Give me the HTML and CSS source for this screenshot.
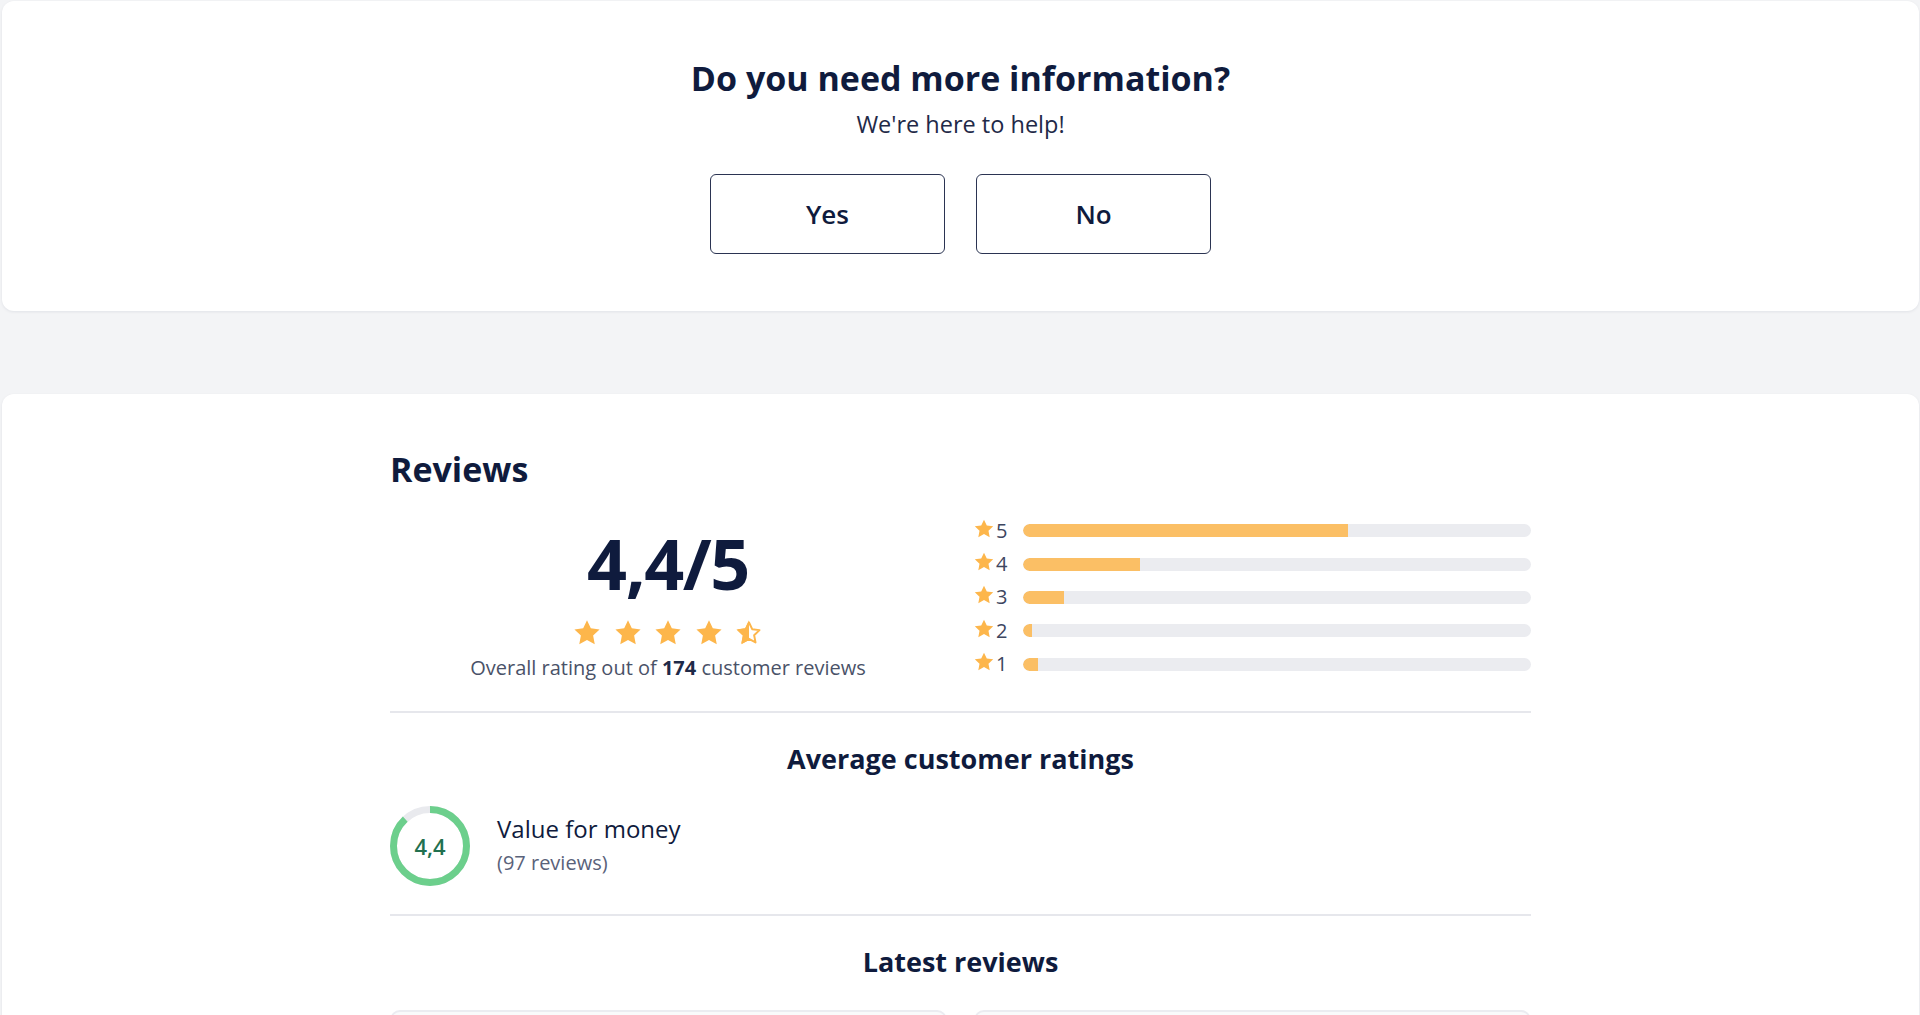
FILE: index.html
```html
<!DOCTYPE html>
<html lang="en">
<head>
<meta charset="utf-8">
<title>Reviews</title>
<link rel="stylesheet" href="styles.css">
</head>
<body>
<div class="page">
  <section class="card help">
    <h2 class="help-title">Do you need more information?</h2>
    <p class="help-sub">We're here to help!</p>
    <div class="help-actions">
      <button class="btn">Yes</button>
      <button class="btn">No</button>
    </div>
  </section>

  <section class="card reviews">
    <div class="inner">
      <h2 class="reviews-title">Reviews</h2>
      <div class="summary">
        <div class="overall">
          <div class="score">4,4/5</div>
          <div class="stars">
            <svg class="star" viewBox="0 0 24 24"><path d="M12 1.8l3.05 6.4 7 .9-5.15 4.85 1.3 6.95L12 17.5l-6.2 3.4 1.3-6.95L1.95 9.1l7-.9z"/></svg>
            <svg class="star" viewBox="0 0 24 24"><path d="M12 1.8l3.05 6.4 7 .9-5.15 4.85 1.3 6.95L12 17.5l-6.2 3.4 1.3-6.95L1.95 9.1l7-.9z"/></svg>
            <svg class="star" viewBox="0 0 24 24"><path d="M12 1.8l3.05 6.4 7 .9-5.15 4.85 1.3 6.95L12 17.5l-6.2 3.4 1.3-6.95L1.95 9.1l7-.9z"/></svg>
            <svg class="star" viewBox="0 0 24 24"><path d="M12 1.8l3.05 6.4 7 .9-5.15 4.85 1.3 6.95L12 17.5l-6.2 3.4 1.3-6.95L1.95 9.1l7-.9z"/></svg>
            <svg class="star half" viewBox="0 0 24 24">
              <defs><clipPath id="halfclip"><rect x="0" y="0" width="12" height="24"/></clipPath></defs>
              <path class="outline" d="M12 3.6l2.55 5.35 5.85.75-4.3 4.05 1.1 5.8L12 16.7l-5.2 2.85 1.1-5.8-4.3-4.05 5.85-.75z"/>
              <path class="fillhalf" clip-path="url(#halfclip)" d="M12 1.8l3.05 6.4 7 .9-5.15 4.85 1.3 6.95L12 17.5l-6.2 3.4 1.3-6.95L1.95 9.1l7-.9z"/>
            </svg>
          </div>
          <p class="overall-caption">Overall rating out of <strong>174</strong> customer reviews</p>
        </div>
        <div class="dist">
          <div class="dist-row">
            <span class="dist-label"><svg class="mini-star" viewBox="0 0 24 24"><path d="M12 1.8l3.05 6.4 7 .9-5.15 4.85 1.3 6.95L12 17.5l-6.2 3.4 1.3-6.95L1.95 9.1l7-.9z"/></svg>5</span>
            <span class="track"><span class="fill" style="width:64%"></span></span>
          </div>
          <div class="dist-row">
            <span class="dist-label"><svg class="mini-star" viewBox="0 0 24 24"><path d="M12 1.8l3.05 6.4 7 .9-5.15 4.85 1.3 6.95L12 17.5l-6.2 3.4 1.3-6.95L1.95 9.1l7-.9z"/></svg>4</span>
            <span class="track"><span class="fill" style="width:23%"></span></span>
          </div>
          <div class="dist-row">
            <span class="dist-label"><svg class="mini-star" viewBox="0 0 24 24"><path d="M12 1.8l3.05 6.4 7 .9-5.15 4.85 1.3 6.95L12 17.5l-6.2 3.4 1.3-6.95L1.95 9.1l7-.9z"/></svg>3</span>
            <span class="track"><span class="fill" style="width:8%"></span></span>
          </div>
          <div class="dist-row">
            <span class="dist-label"><svg class="mini-star" viewBox="0 0 24 24"><path d="M12 1.8l3.05 6.4 7 .9-5.15 4.85 1.3 6.95L12 17.5l-6.2 3.4 1.3-6.95L1.95 9.1l7-.9z"/></svg>2</span>
            <span class="track"><span class="fill" style="width:1.8%"></span></span>
          </div>
          <div class="dist-row">
            <span class="dist-label"><svg class="mini-star" viewBox="0 0 24 24"><path d="M12 1.8l3.05 6.4 7 .9-5.15 4.85 1.3 6.95L12 17.5l-6.2 3.4 1.3-6.95L1.95 9.1l7-.9z"/></svg>1</span>
            <span class="track"><span class="fill" style="width:2.9%"></span></span>
          </div>
        </div>
      </div>

      <hr class="divider">

      <h3 class="section-title">Average customer ratings</h3>
      <div class="ratings">
        <div class="rating-item">
          <div class="ring">
            <svg viewBox="0 0 80 80">
              <circle class="ring-bg" cx="40" cy="40" r="36.5"/>
              <circle class="ring-fg" cx="40" cy="40" r="36.5" style="stroke-dasharray:201.8 229.3"/>
            </svg>
            <span class="ring-value">4,4</span>
          </div>
          <div class="rating-text">
            <div class="rating-name">Value for money</div>
            <div class="rating-count">(97 reviews)</div>
          </div>
        </div>
      </div>

      <hr class="divider">

      <h3 class="section-title">Latest reviews</h3>
      <div class="latest">
        <div class="review-card"></div>
        <div class="review-card"></div>
      </div>
    </div>
  </section>
</div>
</body>
</html>
```

FILE: styles.css
```css
* { box-sizing: border-box; }

html, body {
  margin: 0;
  padding: 0;
  background: #f3f4f6;
  font-family: "Open Sans", "Noto Sans", "Liberation Sans", sans-serif;
  color: #101c3c;
}

.page {
  padding: 1px 1px 0 2px;
  display: flex;
  flex-direction: column;
  gap: 83px;
}

.card {
  background: #ffffff;
  border-radius: 12px;
  box-shadow: 0 1px 3px rgba(16, 24, 60, 0.08);
}

/* Help card */
.help {
  padding: 55px 0 57px;
  display: flex;
  flex-direction: column;
  align-items: center;
}

.help-title {
  margin: 0;
  font-size: 34px;
  font-weight: 700;
  line-height: 44px;
  color: #0f1b3d;
}

.help-sub {
  margin: 9px 0 0;
  font-size: 23.5px;
  line-height: 30px;
  color: #1f2a48;
}

.help-actions {
  margin-top: 35px;
  display: flex;
  gap: 31px;
}

.btn {
  width: 235px;
  height: 80px;
  background: #fff;
  border: 1.5px solid #2b3452;
  border-radius: 6px;
  font-family: inherit;
  font-size: 26px;
  font-weight: 600;
  color: #0f1b3d;
}

/* Reviews card */
.reviews {
  padding: 53px 0 0;
  min-height: 700px;
}

.inner {
  width: 1141px;
  margin: 0 auto;
}

.reviews-title {
  margin: 0;
  font-size: 34px;
  font-weight: 700;
  line-height: 44px;
  color: #0f1b3d;
}

.summary {
  margin-top: 21px;
  display: grid;
  grid-template-columns: 556px 556px;
  column-gap: 29px;
}

.overall {
  display: flex;
  flex-direction: column;
  align-items: center;
  padding-top: 15px;
}

.score {
  font-size: 70px;
  font-weight: 700;
  line-height: 72px;
  color: #0f1b3d;
  letter-spacing: -1.4px;
}

.stars {
  margin-top: 19px;
  display: flex;
  gap: 10.5px;
}

.star {
  width: 30px;
  height: 30px;
  fill: #fdb64b;
}

.star.half .outline {
  fill: none;
  stroke: #fdb64b;
  stroke-width: 1.6;
  stroke-linejoin: round;
}

.overall-caption {
  margin: 7px 0 0;
  font-size: 20px;
  line-height: 26px;
  color: #4a5268;
}

.overall-caption strong {
  color: #1f2a48;
  font-weight: 700;
}

.dist {
  display: flex;
  flex-direction: column;
  padding-top: 2px;
}

.dist-row {
  height: 33.4px;
  display: flex;
  align-items: center;
}

.dist-label {
  width: 48px;
  display: flex;
  align-items: center;
  font-size: 20px;
  color: #3d4660;
  line-height: 1;
}

.mini-star {
  width: 22px;
  height: 22px;
  fill: #fdb64b;
  margin-left: -2px;
  margin-right: 1px;
  margin-top: -4px;
}

.track {
  flex: 1;
  height: 13px;
  background: #ebecf0;
  border-radius: 7px;
  overflow: hidden;
  display: flex;
}

.fill {
  height: 100%;
  background: #fbbf65;
  border-radius: 7px 0 0 7px;
}

.divider {
  margin: 30px 0 0;
  border: 0;
  border-top: 2px solid #e6e7ec;
}

.section-title {
  margin: 28px 0 0;
  text-align: center;
  font-size: 27px;
  font-weight: 700;
  line-height: 36px;
  color: #0f1b3d;
}

.ratings {
  margin-top: 29px;
  margin-bottom: -2px;
}

.rating-item {
  display: flex;
  align-items: center;
  gap: 27px;
}

.ring {
  position: relative;
  width: 80px;
  height: 80px;
}

.ring svg {
  width: 80px;
  height: 80px;
  transform: rotate(-90deg);
}

.ring-bg {
  fill: none;
  stroke: #e9eaee;
  stroke-width: 7;
}

.ring-fg {
  fill: none;
  stroke: #6ccf8c;
  stroke-width: 7;
}

.ring-value {
  position: absolute;
  inset: 0;
  display: flex;
  align-items: center;
  justify-content: center;
  font-size: 22px;
  font-weight: 600;
  color: #22704f;
}

.rating-text {
  display: flex;
  flex-direction: column;
  padding-bottom: 4px;
}

.rating-name {
  font-size: 24px;
  line-height: 32px;
  color: #0f1b3d;
}

.rating-count {
  margin-top: 5px;
  font-size: 20px;
  line-height: 26px;
  color: #5a627a;
}

.rating-count, .rating-name { white-space: nowrap; }

.latest {
  margin-top: 30px;
  display: grid;
  grid-template-columns: 557px 557px;
  column-gap: 27px;
}

.review-card {
  height: 200px;
  background: #f9fafb;
  border: 2px solid #ebecf1;
  border-radius: 10px;
}
```
